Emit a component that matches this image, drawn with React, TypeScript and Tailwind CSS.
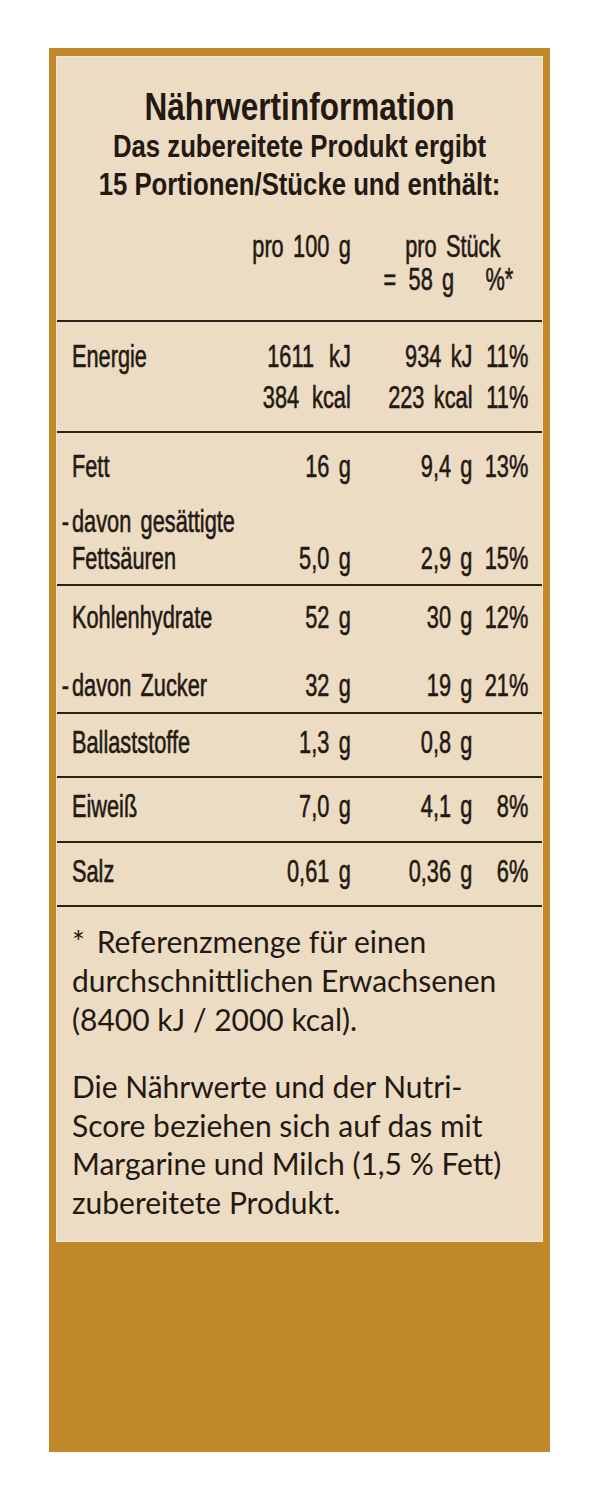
type Row = {
  label: string;
  sub?: boolean;
  v100: string;
  vPiece: string;
  pct: string;
};

const cols = "grid grid-cols-[250px_160px_179px_82px]";

function Dash() {
  return <span className="-ml-[15px] inline-block w-[15px]">-</span>;
}

function ValueLine({ row }: { row: Row }) {
  return (
    <div className={`${cols} whitespace-nowrap leading-[37px]`}>
      <div>
        {row.sub && <Dash />}
        {row.label}
      </div>
      <div className="text-right">{row.v100}</div>
      <div className="text-right">{row.vPiece}</div>
      <div className="text-right">{row.pct}</div>
    </div>
  );
}

export default function App() {
  return (
    <div className="h-[1500px] w-full bg-white pl-[49px] pt-[48px]">
      <div className="h-[1404px] w-[501px] bg-[#c1882a] px-[7px] pt-[8px]">
        <div className="h-[1186px] w-[487px] overflow-hidden border border-[#f3e7d1] bg-[#ebdcc3] text-[#241912]">
          {/* Heading */}
          <div className="scale-x-[0.83] whitespace-nowrap pt-[29px] text-center font-['Liberation_Sans',sans-serif] font-bold">
            <h1 className="text-[38px] leading-[42px]">Nährwertinformation</h1>
            <p className="text-[31px] leading-[38px]">Das zubereitete Produkt ergibt</p>
            <p className="text-[31px] leading-[38px]">15 Portionen/Stücke und enthält:</p>
          </div>

          {/* Table, squeezed to a condensed face */}
          <div className="w-[716px] origin-left scale-x-[0.68] font-['Liberation_Sans',sans-serif] text-[32px] [-webkit-text-stroke:0.6px_#241912] [word-spacing:0.15em]">
            <div className="border-b-2 border-[#2e2118] pb-[24px] pl-[22px] pt-[26px] leading-[33px]">
              <div className="grid grid-cols-[250px_160px_261px]">
                <div />
                <div className="text-right">pro 100 g</div>
                <div className="pr-[41px] text-right">pro Stück</div>
              </div>
              <div className="grid grid-cols-[250px_160px_261px]">
                <div />
                <div />
                <div className="flex justify-end gap-[46px] pr-[22px]">
                  <span>
                    =<span className="ml-[18px]">58 g</span>
                  </span>
                  <span>%*</span>
                </div>
              </div>
            </div>

            {/* Energie */}
            <div className="border-b-2 border-[#2e2118] pb-[13px] pl-[22px] pt-[14px]">
              <div className={`${cols} whitespace-nowrap leading-[41px]`}>
                <div>Energie</div>
                <div className="flex justify-end gap-[22px]">
                  <span>1611</span>
                  <span>kJ</span>
                </div>
                <div className="text-right">934 kJ</div>
                <div className="text-right">11%</div>
              </div>
              <div className={`${cols} whitespace-nowrap leading-[41px]`}>
                <div />
                <div className="flex justify-end gap-[19px]">
                  <span>384</span>
                  <span>kcal</span>
                </div>
                <div className="text-right">223 kcal</div>
                <div className="text-right">11%</div>
              </div>
            </div>

            {/* Fett */}
            <div className="border-b-2 border-[#2e2118] pb-[7px] pl-[22px] pt-[15px]">
              <ValueLine row={{ label: "Fett", v100: "16 g", vPiece: "9,4 g", pct: "13%" }} />
              <div className="mt-[18px] whitespace-nowrap leading-[37px]">
                <Dash />
                davon gesättigte
              </div>
              <ValueLine row={{ label: "Fettsäuren", v100: "5,0 g", vPiece: "2,9 g", pct: "15%" }} />
            </div>

            {/* Kohlenhydrate */}
            <div className="border-b-2 border-[#2e2118] pb-[8px] pl-[22px] pt-[13px]">
              <ValueLine row={{ label: "Kohlenhydrate", v100: "52 g", vPiece: "30 g", pct: "12%" }} />
              <div className="mt-[31px]">
                <ValueLine row={{ label: "davon Zucker", sub: true, v100: "32 g", vPiece: "19 g", pct: "21%" }} />
              </div>
            </div>

            <div className="border-b-2 border-[#2e2118] pb-[15px] pl-[22px] pt-[10px]">
              <ValueLine row={{ label: "Ballaststoffe", v100: "1,3 g", vPiece: "0,8 g", pct: "" }} />
            </div>
            <div className="border-b-2 border-[#2e2118] pb-[16px] pl-[22px] pt-[10px]">
              <ValueLine row={{ label: "Eiweiß", v100: "7,0 g", vPiece: "4,1 g", pct: "8%" }} />
            </div>
            <div className="border-b-2 border-[#2e2118] pb-[15px] pl-[22px] pt-[10px]">
              <ValueLine row={{ label: "Salz", v100: "0,61 g", vPiece: "0,36 g", pct: "6%" }} />
            </div>
          </div>

          {/* Footnotes */}
          <div className="whitespace-nowrap pl-[15px] pt-[15px] font-['Lato','Open_Sans',sans-serif] text-[30px]">
            <div className="leading-[39px]">
              <div>
                <span className="mr-[12px]">*</span>Referenzmenge für einen
              </div>
              <div>durchschnittlichen Erwachsenen</div>
              <div>(8400 kJ / 2000 kcal).</div>
            </div>
            <div className="mt-[28px] leading-[38.5px]">
              <div>Die Nährwerte und der Nutri-</div>
              <div>Score beziehen sich auf das mit</div>
              <div>Margarine und Milch (1,5 % Fett)</div>
              <div>zubereitete Produkt.</div>
            </div>
          </div>
        </div>
      </div>
    </div>
  );
}
